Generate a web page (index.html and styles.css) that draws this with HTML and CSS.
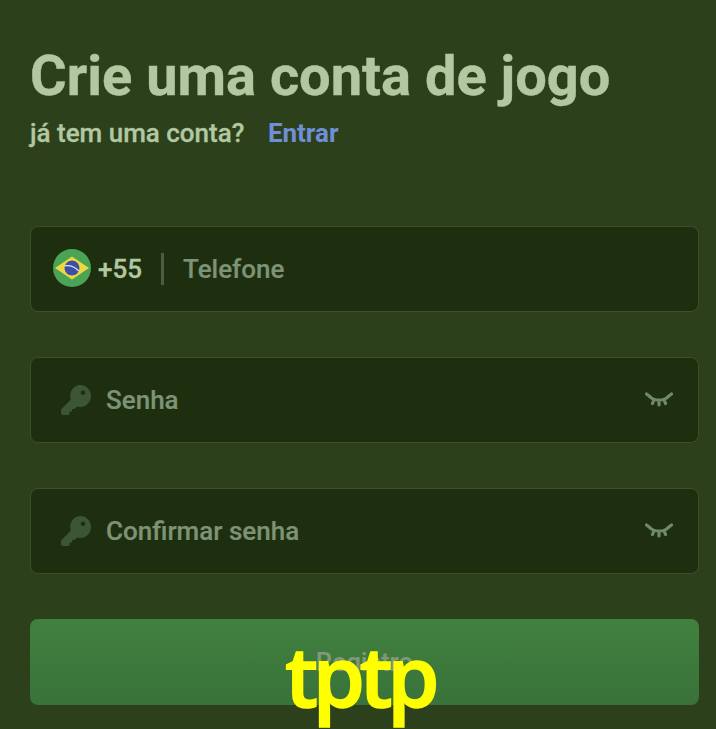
FILE: index.html
```html
<!DOCTYPE html>
<html lang="pt">
<head>
  <meta charset="UTF-8" />
  <meta name="viewport" content="width=device-width, initial-scale=1.0"/>
  <title>Crie uma conta de jogo</title>
  <link rel="stylesheet" href="styles.css">
</head>
<body>
  <div class="container">
    <h1>Crie uma conta de jogo</h1>
    <p class="sub">já tem uma conta? <a href="#" class="entrar">Entrar</a></p>

    <form class="formulario">
      <div class="campo">
        <svg class="bandeira" viewBox="0 0 38 38" width="38" height="38">
          <circle cx="19" cy="19" r="19" fill="#4ba356"/>
          <path d="M19 7.500 36 19 19 30.500 2 19z" fill="#ecd83f"/>
          <circle cx="19" cy="19" r="7.500" fill="#3d4ea8"/>
          <path d="M11.800 16.800c5.200-.8 10.500 1.400 14 5.200" fill="none" stroke="#dfe6e6" stroke-width="1.200"/>
        </svg>
        <span class="codigo">+55</span>
        <span class="divisor"></span>
        <span class="dica">Telefone</span>
      </div>

      <div class="campo campo-senha">
        <svg class="chave" viewBox="0 0 32 32" width="32" height="32">
          <path fill-rule="evenodd" d="M20 1a11 11 0 0 1 0 22c-1 0-2-.1-3-.4l-2.500 2.400H12v2.500H9.500V30l-1 1H3a2 2 0 0 1-2-2v-3.500l9.800-9.800A11 11 0 0 1 20 1zm3 5.500a2.300 2.300 0 1 0 0 4.600 2.300 2.300 0 0 0 0-4.600z" fill="#3c5633"/>
        </svg>
        <span class="dica">Senha</span>
        <svg class="olho" viewBox="0 0 28 16" width="28" height="16">
          <path d="M4 4c5 5.500 15 5.500 20 0M1.500 2 5.500 5M26.500 2 22.500 5M9 7.500 7.500 11.500M14 9v4M19 7.500l1.500 4" fill="none" stroke="#6f8a66" stroke-width="3.200" stroke-linecap="round"/>
        </svg>
      </div>

      <div class="campo campo-senha">
        <svg class="chave" viewBox="0 0 32 32" width="32" height="32">
          <path fill-rule="evenodd" d="M20 1a11 11 0 0 1 0 22c-1 0-2-.1-3-.4l-2.500 2.400H12v2.500H9.500V30l-1 1H3a2 2 0 0 1-2-2v-3.500l9.800-9.800A11 11 0 0 1 20 1zm3 5.500a2.300 2.300 0 1 0 0 4.600 2.300 2.300 0 0 0 0-4.600z" fill="#3c5633"/>
        </svg>
        <span class="dica">Confirmar senha</span>
        <svg class="olho" viewBox="0 0 28 16" width="28" height="16">
          <path d="M4 4c5 5.500 15 5.500 20 0M1.500 2 5.500 5M26.500 2 22.500 5M9 7.500 7.500 11.500M14 9v4M19 7.500l1.500 4" fill="none" stroke="#6f8a66" stroke-width="3.200" stroke-linecap="round"/>
        </svg>
      </div>

      <button type="button">Registro</button>
    </form>
  </div>
  <div class="marca">tptp</div>
</body>
</html>
```

FILE: styles.css
```css
html, body {
  height: 100%;
}
body {
  font-family: Roboto, sans-serif;
  background-color: #2d401c;
  margin: 0;
  overflow: hidden;
  position: relative;
}
.container {
  padding: 42px 17px 0 30px;
}
h1 {
  margin: 0;
  font-size: 56px;
  line-height: 68px;
  font-weight: 700;
  -webkit-text-stroke: 0.4px #b2c8a1;
  color: #b2c8a1;
}
.sub {
  margin: 8px 0 0;
  font-size: 26px;
  line-height: 30px;
  font-weight: 500;
  -webkit-text-stroke: 0.3px #b2c8a1;
  color: #b2c8a1;
}
.entrar {
  margin-left: 17px;
  color: #6f8fd8;
  font-weight: 700;
  -webkit-text-stroke: 0;
  text-decoration: none;
}
.formulario {
  margin-top: 78px;
  display: flex;
  flex-direction: column;
  gap: 45px;
}
.campo {
  height: 86px;
  box-sizing: border-box;
  display: flex;
  align-items: center;
  padding: 0 22px;
  background: #1d2f0f;
  border: 1px solid #3a5227;
  border-radius: 8px;
}
.bandeira {
  flex: none;
  margin-bottom: 2px;
}
.codigo {
  margin-left: 7px;
  font-size: 26px;
  font-weight: 500;
  -webkit-text-stroke: 0.3px #b2c8a1;
  color: #b2c8a1;
}
.divisor {
  width: 3px;
  height: 32px;
  margin: 0 19px;
  background: #4a5f40;
}
.dica {
  font-size: 26px;
  font-weight: 500;
  -webkit-text-stroke: 0.2px #7d9375;
  color: #7d9375;
}
.campo-senha {
  padding: 0 25px 0 29px;
}
.chave {
  flex: none;
  margin-right: 14px;
}
.olho {
  flex: none;
  margin-left: auto;
}
button {
  height: 86px;
  background: linear-gradient(#41813f, #39723a);
  color: #82987b;
  border: none;
  border-radius: 8px;
  font-family: Roboto, sans-serif;
  font-size: 26px;
  font-weight: 500;
  -webkit-text-stroke: 0.2px #82987b;
}
.marca {
  position: absolute;
  left: 285px;
  top: 620px;
  font-family: "Open Sans", sans-serif;
  font-size: 84px;
  line-height: 109px;
  font-weight: 600;
  -webkit-text-stroke: 1.5px #ffff00;
  letter-spacing: -5.5px;
  color: #ffff00;
}
```
